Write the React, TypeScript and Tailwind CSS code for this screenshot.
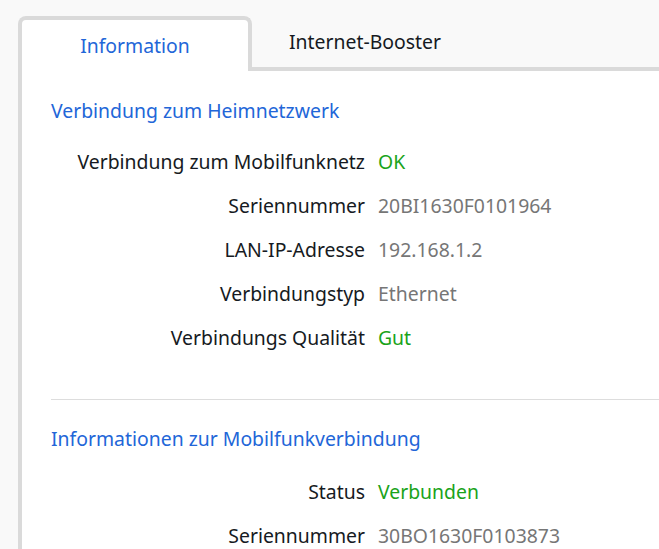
import React from 'react';

type Row = { label: string; value: string; tone: 'ok' | 'plain' };

const homeNetwork: Row[] = [
  { label: 'Verbindung zum Mobilfunknetz', value: 'OK', tone: 'ok' },
  { label: 'Seriennummer', value: '20BI1630F0101964', tone: 'plain' },
  { label: 'LAN-IP-Adresse', value: '192.168.1.2', tone: 'plain' },
  { label: 'Verbindungstyp', value: 'Ethernet', tone: 'plain' },
  { label: 'Verbindungs Qualität', value: 'Gut', tone: 'ok' },
];

const mobile: Row[] = [
  { label: 'Status', value: 'Verbunden', tone: 'ok' },
  { label: 'Seriennummer', value: '30BO1630F0103873', tone: 'plain' },
];

function InfoRows({ rows }: { rows: Row[] }) {
  return (
    <div className="flex flex-col">
      {rows.map((r) => (
        <div key={r.label + r.value} className="flex h-[44px] items-center">
          <span className="w-[314px] shrink-0 text-right text-[#161a22]">{r.label}</span>
          <span className={r.tone === 'ok' ? 'ml-[13px] text-[#1aa31a]' : 'ml-[13px] text-[#767676]'}>
            {r.value}
          </span>
        </div>
      ))}
    </div>
  );
}

export default function App() {
  return (
    <div
      className="min-h-screen overflow-hidden bg-[#f9f9f9] pl-[18px] pt-[16px] text-[19.4px] leading-[24px]"
      style={{ fontFamily: '"Noto Sans", "Open Sans", sans-serif' }}
    >
      {/* tabs */}
      <div className="flex h-[55px]">
        <div className="flex w-[234px] items-center justify-center rounded-t-[8px] border-4 border-b-0 border-[#dadada] bg-white text-[#2266d8]">
          Information
        </div>
        <div className="flex w-[226px] items-center justify-center border-b-4 border-[#dadada] text-[#161a22]">
          Internet-Booster
        </div>
        <div className="flex-1 border-b-4 border-[#dadada]" />
      </div>

      {/* panel */}
      <div className="min-h-[500px] border-l-4 border-[#dadada] bg-white pl-[29px] pt-[28px]">
        <h2 className="text-[#2266d8]">Verbindung zum Heimnetzwerk</h2>
        <div className="mt-[17px]">
          <InfoRows rows={homeNetwork} />
        </div>

        <div className="mt-[39px] h-px bg-[#dddddd]" />

        <h2 className="mt-[27px] text-[#2266d8]">Informationen zur Mobilfunkverbindung</h2>
        <div className="mt-[19px]">
          <InfoRows rows={mobile} />
        </div>
      </div>
    </div>
  );
}
